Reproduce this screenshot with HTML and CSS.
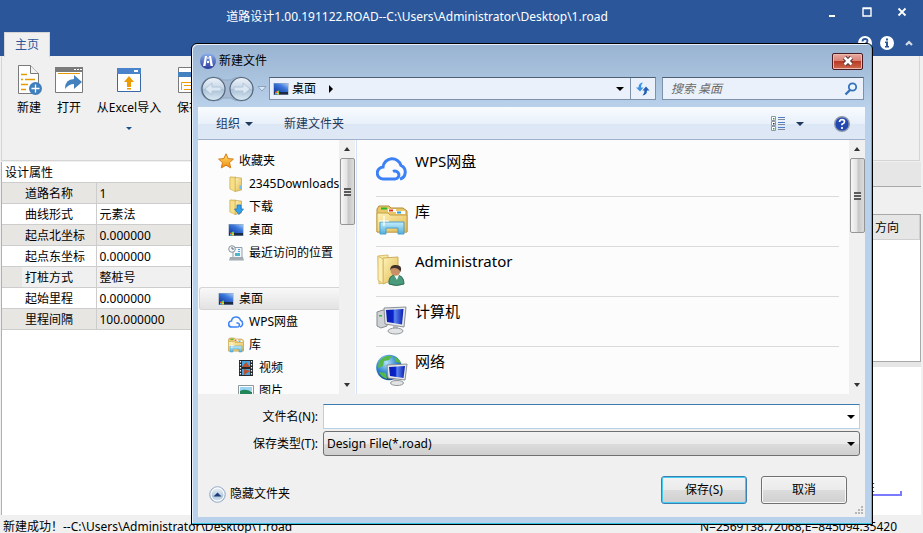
FILE: index.html
```html
<!DOCTYPE html>
<html lang="zh-CN">
<head>
<meta charset="utf-8">
<title>道路设计</title>
<link rel="stylesheet" href="styles.css">
</head>
<body>
<svg class="defs" width="0" height="0" aria-hidden="true">
  <defs>
    <linearGradient id="screen" x1="0" y1="1" x2="1" y2="0"><stop offset="0" stop-color="#123a9c"/><stop offset=".6" stop-color="#3d78dc"/><stop offset="1" stop-color="#a9cdf5"/></linearGradient>
    <linearGradient id="monitor" x1="0" y1="0" x2="1" y2="0"><stop offset="0" stop-color="#0b1eb4"/><stop offset=".4" stop-color="#0a22c8"/><stop offset=".5" stop-color="#5b86f0"/><stop offset="1" stop-color="#0a1cb0"/></linearGradient>
    <linearGradient id="folder" x1="0" y1="0" x2="1" y2="1"><stop offset="0" stop-color="#fdf3b8"/><stop offset="1" stop-color="#e3b94f"/></linearGradient>
    <linearGradient id="glass" x1="0" y1="0" x2="0" y2="1"><stop offset="0" stop-color="#c5eefb"/><stop offset="1" stop-color="#52aede"/></linearGradient>
    <linearGradient id="orb" x1="0" y1="0" x2="0" y2="1"><stop offset="0" stop-color="#eef4fa"/><stop offset=".5" stop-color="#c3d3e4"/><stop offset=".51" stop-color="#a9bfd5"/><stop offset="1" stop-color="#dcebf6"/></linearGradient>
    <radialGradient id="globe" cx=".4" cy=".3" r=".7"><stop offset="0" stop-color="#b5e4fb"/><stop offset=".6" stop-color="#2f83cf"/><stop offset="1" stop-color="#144a92"/></radialGradient>
    <linearGradient id="badge" x1="0" y1="0" x2="0" y2="1"><stop offset="0" stop-color="#8fb3ea"/><stop offset="1" stop-color="#2a3b9e"/></linearGradient>
    <linearGradient id="star" x1="0" y1="0" x2="0" y2="1"><stop offset="0" stop-color="#ffe36a"/><stop offset="1" stop-color="#f08a12"/></linearGradient>
  </defs>
  <symbol id="i-desktop" viewBox="0 0 16 16"><rect x=".5" y="2" width="15" height="12" fill="#8fa3bd"/><rect x="1" y="2.500" width="14" height="8.500" fill="url(#screen)"/><rect x="1" y="11" width="14" height="2.500" fill="#1c2a44"/><path d="M2 11l2-1v2H2z" fill="#f0592b"/><path d="M4 10l2-.5V12H4z" fill="#7ed04b"/><path d="M2 12h2v1.500H2z" fill="#43b9f0"/><path d="M4 12h2v1.500H4z" fill="#ffd232"/></symbol>
  <symbol id="i-cloud" viewBox="0 0 32 26"><path d="M19 23H7.500a6 6 0 0 1-.5-12A9.200 9.200 0 0 1 25 9.500a7.200 7.200 0 0 1-1 13.500" fill="none" stroke="#3c82f6" stroke-width="3"/><path d="M17 15.500a4 4 0 1 1 2 7.500" fill="none" stroke="#3c82f6" stroke-width="3"/></symbol>
  <symbol id="i-folder" viewBox="0 0 16 16"><path d="M2 1h6v12H2z" fill="#f8e79c" stroke="#cfae55" stroke-width=".6"/><path d="M7 1.500l6.500.5v12L7 15.500z" fill="url(#folder)" stroke="#bb963c" stroke-width=".6"/><path d="M2 1l5 1v13.500L2 13z" fill="#f7df85" stroke="#cfae55" stroke-width=".6"/><path d="M11.500 9.500h1.500v3.500h-1.500z" fill="#6ec0ea"/></symbol>
  <symbol id="i-library" viewBox="0 0 32 32"><path d="M1 28V5l2-3h10l2 2h12l4 3v21z" fill="#e9c868" stroke="#b28c3a"/><path d="M5 3.500h6v2H5z" fill="#2eb52e"/><path d="M12 5h8v3h-8z" fill="#fff"/><path d="M13 5.500h4v2h-4z" fill="#e03222"/><path d="M20 7h9v3h-9z" fill="#fff"/><path d="M21 7.500h4v2h-4z" fill="#249be0"/><path d="M1 9h11l2 2h17v17H1z" fill="url(#folder)" stroke="#c8a04a"/><path d="M4 30V18h24v12h-6v-6H10v6z" fill="url(#glass)" stroke="#4d9fc9"/><path d="M8 12v10M3 17h10" stroke="#fff" stroke-width="1.200"/></symbol>
</svg>

<header class="app-header">
  <div class="title-row">
    <h1 class="app-title">道路设计1.00.191122.ROAD--C:\Users\Administrator\Desktop\1.road</h1>
    <button class="win-btn" aria-label="最小化"><svg width="12" height="12"><path d="M3 9h6v2H3z" fill="#fff"/></svg></button>
    <button class="win-btn" aria-label="最大化"><svg width="12" height="12"><path d="M2 2.500h8v7.500H2zM1.500 2h9" fill="none" stroke="#fff" stroke-width="1.400"/></svg></button>
    <button class="win-btn" aria-label="关闭"><svg width="12" height="12"><path d="M2.500 2.500l7 7m0-7l-7 7" stroke="#fff" stroke-width="1.800"/></svg></button>
  </div>
  <div class="tab-row">
    <button class="tab">主页</button>
    <div class="header-tools">
      <button class="plain" aria-label="帮助"><svg width="14" height="14"><circle cx="7" cy="7" r="7" fill="#fff"/><path d="M4.500 5.500q0-2.500 2.500-2.500t2.500 2q0 1.500-2.500 3v1M7 10v2" fill="none" stroke="#2b579a" stroke-width="1.800"/></svg></button>
      <button class="plain" aria-label="关于"><svg width="14" height="14"><circle cx="7" cy="7" r="7" fill="#fff"/><path d="M6 2.500h2v2H6zM5 5.500h3V10h1v1.500H5V10h1V7H5z" fill="#2b579a"/></svg></button>
      <button class="plain" aria-label="折叠功能区"><svg width="14" height="14"><path d="M4 9l3-3 3 3" fill="none" stroke="#d5dbe6" stroke-width="2.200"/></svg></button>
    </div>
  </div>
</header>

<nav class="ribbon" aria-label="主页">
  <button class="tool"><svg width="28" height="32" viewBox="0 0 28 32"><path d="M3.500 1.500h12l8 8v20h-20z" fill="#fff" stroke="#7a7a7a"/><path d="M15.500 1.500v8h8" fill="#f2f2f2" stroke="#7a7a7a"/><path d="M6 10.500h6M10 15.500h10M6 15.500h2M6 20.500h7M6 25.500h5" stroke="#e39a05" stroke-width="1.400"/><circle cx="20.500" cy="24.500" r="6.500" fill="#3f7fbd"/><path d="M16.500 24.500h8m-4-4v8" stroke="#fff" stroke-width="1.300"/></svg>新建</button>
  <button class="tool"><svg width="28" height="32" viewBox="0 0 28 32"><path d="M.5 3.500h27v25H.5z" fill="#fff" stroke="#7a7a7a"/><path d="M0 3h28v5H0z" fill="#7a7a7a"/><path d="M19 5h2v1h-2zM22 5h2v1h-2zM25 5h2v1h-2z" fill="#fff"/><path d="M3 9.500h22" stroke="#e39a05"/><path d="M10 25q0-10 9-10v-4l8 7-8 7v-5q-5 0-9 5z" fill="#4382be"/></svg>打开</button>
  <button class="tool tool-wide"><svg width="28" height="32" viewBox="0 0 28 32"><path d="M2.500 4.500h23v23h-23z" fill="#fff" stroke="#3a68a6"/><path d="M2 4h24v6H2z" fill="#4a83c9"/><path d="M19 6h4v2h-4z" fill="#fff"/><path d="M14 12l5 6h-3v5h-4v-5H9zM12 24h4v1.500h-4z" fill="#eb9c05"/></svg>从Excel导入<span class="caret caret-blue"></span></button>
  <button class="tool"><svg width="28" height="32" viewBox="0 0 28 32"><path d="M3.500 3.500h20v25h-20z" fill="#fff" stroke="#7a7a7a"/><path d="M3 8h21v5H3z" fill="#4382be"/><path d="M6.500 26v-7.500h14M9 21.500h10M9 25.500h10" fill="none" stroke="#eb9c05"/></svg>保存</button>
</nav>

<main class="workspace">
  <section class="props">
    <table class="prop-table">
      <caption>设计属性</caption>
      <tbody>
        <tr><th scope="row">道路名称</th><td>1</td></tr>
        <tr><th scope="row">曲线形式</th><td>元素法</td></tr>
        <tr><th scope="row">起点北坐标</th><td>0.000000</td></tr>
        <tr><th scope="row">起点东坐标</th><td>0.000000</td></tr>
        <tr class="current"><th scope="row">打桩方式</th><td>整桩号</td></tr>
        <tr><th scope="row">起始里程</th><td>0.000000</td></tr>
        <tr><th scope="row">里程间隔</th><td>100.000000</td></tr>
      </tbody>
    </table>
  </section>
  <section class="design">
    <div class="band"></div>
    <div class="grid-box"><div class="grid-head">方向</div></div>
    <div class="canvas"><div class="axis">E</div></div>
  </section>
</main>

<footer class="status"><span>新建成功！--C:\Users\Administrator\Desktop\1.road</span><span>N=2569138.72068,E=845094.35420</span></footer>

<div class="dialog" role="dialog" aria-labelledby="dlg-title">
  <div class="dlg-title-row">
    <svg width="16" height="16"><circle cx="8" cy="8" r="8" fill="url(#badge)"/><path d="M5 3h2L5.500 13H3zM9 3h2l2 10h-2.500zM7.500 4h1v2h-1zM7 8h2v2H7z" fill="#fff"/></svg>
    <h2 id="dlg-title">新建文件</h2>
    <button class="dlg-close" aria-label="关闭"><svg width="14" height="12"><path d="M3.500 2.500l7 7m0-7l-7 7" stroke="#5b3434" stroke-width="4.600"/><path d="M3.500 2.500l7 7m0-7l-7 7" stroke="#fff" stroke-width="2.600"/></svg></button>
  </div>
  <div class="nav-row">
    <button class="plain nav-orbs" aria-label="后退 前进"><svg width="56" height="26"><path d="M13 1q7 0 10 3h8q3-3 10-3a12 12 0 0 1 0 24q-7 0-10-3h-8q-3 3-10 3a12 12 0 0 1 0-24z" fill="#a5bad2" stroke="#8fa7c1"/><g fill="url(#orb)" stroke="#53657b" stroke-width="1.200"><circle cx="13.500" cy="13" r="11.500"/><circle cx="41.500" cy="13" r="11.500"/></g><path d="M5 13l7-6v4h9v4h-9v4zM50 13l-7-6v4h-9v4h9v4z" fill="#dbe7f2" stroke="#b3c6d9"/></svg></button>
    <button class="plain nav-more" aria-label="最近的页面"><svg width="10" height="8"><path d="M1 1.500h8L5 6z" fill="#dbe8f5" stroke="#8ba3c0"/></svg></button>
    <div class="address">
      <svg width="16" height="16"><use href="#i-desktop"/></svg>
      <span class="crumb">桌面</span>
      <svg width="8" height="8"><path d="M2 0v8l4-4z" fill="#000"/></svg>
      <button class="plain addr-drop" aria-label="以前的位置"><span class="caret"></span></button>
      <button class="plain refresh" aria-label="刷新"><svg width="16" height="16"><path d="M1 6.500h2.500Q3.500 2 8 1.500 6 3.500 6 6.500h2.500L5 10.500z" fill="#3a93e2"/><path d="M7.500 9.500l3.500-4 3.500 4H12q0 4.500-4.500 5 2-2 2-5z" fill="#245fb5"/></svg></button>
    </div>
    <label class="search"><input type="text" placeholder="搜索 桌面" aria-label="搜索 桌面"><svg width="14" height="14"><circle cx="8.500" cy="5" r="3.700" fill="#eaf4fd" stroke="#3573b9" stroke-width="1.800"/><path d="M6 8l-4.500 4.500" stroke="#3573b9" stroke-width="2.400"/></svg></label>
  </div>

  <div class="dlg-toolbar">
    <button class="plain link">组织<span class="caret caret-navy"></span></button>
    <button class="plain link">新建文件夹</button>
    <button class="plain view" aria-label="更改视图"><svg width="16" height="16"><g fill="#fff" stroke="#8c97a5"><path d="M1.500.5h4v4h-4zM1.500 5.500h4v4h-4zM1.500 10.500h4v4h-4z"/></g><path d="M3 2h1.500v1.500H3zM3 12h1.500v1.500H3z" fill="#2da34a"/><path d="M3 7h1.500v1.500H3z" fill="#234"/><path d="M8 1.500h7M8 6.500h7M8 11.500h7" stroke="#4d7fcb"/><path d="M8 3.500h7M8 8.500h7M8 13.500h7" stroke="#7d8998"/></svg><span class="caret caret-navy"></span></button>
    <button class="plain" aria-label="帮助"><svg width="16" height="16"><circle cx="8" cy="8" r="7.300" fill="#2348b0" stroke="#8e99ab" stroke-width="1.400"/><path d="M5.500 6q0-2.300 2.500-2.300t2.500 2q0 1.400-2.500 2.600v1M8 11v2" fill="none" stroke="#fff" stroke-width="1.700"/></svg></button>
  </div>

  <div class="dlg-body">
    <ul class="tree">
      <li><svg width="16" height="16"><path d="M8 .8l2.200 4.800 5.200.5-3.900 3.500 1.200 5.300L8 12.200l-4.700 2.700 1.200-5.300L.6 6.100l5.200-.5z" fill="url(#star)" stroke="#d77a16"/></svg>收藏夹</li>
      <li class="l1"><svg width="16" height="16"><use href="#i-folder"/></svg>2345Downloads</li>
      <li class="l1"><svg width="16" height="16"><use href="#i-folder"/><path d="M9 6h4v4h2.500L11 15.500 6.500 10H9z" fill="#32a1ec" stroke="#1b6fb8" stroke-width=".7"/></svg>下载</li>
      <li class="l1"><svg width="16" height="16"><use href="#i-desktop"/></svg>桌面</li>
      <li class="l1"><svg width="16" height="16"><path d="M5 2.500h9V13H5z" fill="#f1f6fa" stroke="#91a0ac"/><path d="M7 8h5v3H7z" fill="#4db5c6"/><path d="M10 4.500h2M10 6.500h2" stroke="#4b98dd"/><path d="M2 12h13l1 3.500H1z" fill="#a4acb3"/><circle cx="4" cy="4" r="3.300" fill="#f5f7f8" stroke="#87939b"/><path d="M4 2v2h2" fill="none" stroke="#576b79"/></svg>最近访问的位置</li>
      <li class="selected after-gap"><svg width="16" height="16"><use href="#i-desktop"/></svg>桌面</li>
      <li class="l1"><svg width="16" height="16"><use href="#i-cloud"/></svg>WPS网盘</li>
      <li class="l1"><svg width="16" height="16"><use href="#i-library"/></svg>库</li>
      <li class="l2"><svg width="16" height="16"><path d="M1 0h14v16H1z" fill="#24282c"/><path d="M4 1h8v6H4zM4 9h8v6H4z" fill="#4aa3de"/><path d="M4 7l4-5 4 5zM6 15V9l6 2z" fill="#b9502e"/><path d="M2.500 1v15M13.500 1v15" stroke="#eef2f4" stroke-width="1.200" stroke-dasharray="1.500 1.500"/></svg>视频</li>
      <li class="l2"><svg width="16" height="16"><path d="M.5 2.500h15v11H.5z" fill="#fff" stroke="#8e989f"/><path d="M2 4h12v4H2z" fill="#9bd5f3"/><path d="M2 8q5-3 12 1v3H2z" fill="#22855a"/></svg>图片</li>
    </ul>
    <div class="scroll" aria-hidden="true"><span class="up"></span><span class="thumb thumb-tree"></span><span class="down"></span></div>
    <ul class="files">
      <li><svg width="32" height="32" viewBox="0 -2 32 32"><use href="#i-cloud" width="32" height="26"/></svg>WPS网盘</li>
      <li><svg width="32" height="32"><use href="#i-library"/></svg>库</li>
      <li><svg width="32" height="32"><path d="M2 2l10-1v26l-9 3z" fill="#f9eaa6" stroke="#d8bd6a"/><path d="M7 4l15-1v21L7 30z" fill="url(#folder)" stroke="#cbae5c"/><path d="M2 2l5 3v25l-5-4z" fill="#fbeeb2" stroke="#d8bd6a"/><path d="M13 30q-1-9 7-9 8 0 8 9-8 3-15 0z" fill="#4a9a7c" stroke="#2c6c54"/><path d="M18 21l3 5 2-5z" fill="#f5fafa"/><circle cx="19.500" cy="17" r="4.800" fill="#c99066"/><path d="M14 17q0-7 6-6 7 0 4.500 7-2-4-6-4-4 0-4.500 3z" fill="#40322b"/></svg>Administrator</li>
      <li><svg width="32" height="32"><path d="M1 8l6-2 4 1v15l-6 2-4-2z" fill="#cfd3d6" stroke="#878c90"/><path d="M3 11h3v1.500H3z" fill="#35b535"/><path d="M8 4l22-1-2 20-19-3z" fill="#e6e8ea" stroke="#8b9094"/><path d="M10 6l17.500-1-1.500 15.500L11 18z" fill="url(#monitor)"/><path d="M17 21l5 1v3h-5z" fill="#b4b8bc"/><ellipse cx="19.500" cy="27" rx="7.500" ry="3" fill="#e1e3e5" stroke="#92979b"/></svg>计算机</li>
      <li><svg width="32" height="32"><circle cx="13" cy="13.500" r="12.800" fill="url(#globe)"/><path d="M3 7q6-6 13-5l-3 4-5 1-1 5-5 2zM18 3q5 1 7 6l-5-1zM3 18l7 1 1 6q-6-2-8-7z" fill="#55b848"/><path d="M11 11l20-1-2 16-17-2z" fill="#e6e8ea" stroke="#8b9094"/><path d="M13 13l16-1-1.500 12L14 22z" fill="url(#monitor)"/><path d="M18 25l5 1v2h-5z" fill="#b4b8bc"/><ellipse cx="21" cy="29" rx="6.500" ry="2.500" fill="#e1e3e5" stroke="#92979b"/></svg>网络</li>
    </ul>
    <div class="scroll" aria-hidden="true"><span class="up"></span><span class="thumb thumb-files"></span><span class="down"></span></div>
  </div>

  <form class="dlg-footer">
    <div class="field"><label for="fname">文件名(N):</label><div class="combo"><input id="fname" type="text"><span class="caret"></span></div></div>
    <div class="field"><label for="ftype">保存类型(T):</label><div class="combo combo-gray"><select id="ftype"><option>Design File(*.road)</option></select><span class="caret"></span></div></div>
    <div class="actions">
      <button type="button" class="plain hide"><svg width="17" height="17"><circle cx="8.500" cy="8.500" r="7.800" fill="url(#orb)" stroke="#9aa8c3"/><circle cx="8.500" cy="8.500" r="6.500" fill="none" stroke="#fff"/><path d="M4.500 10.500h8l-4-4z" fill="#1e3c7c"/></svg>隐藏文件夹</button>
      <button type="button" class="btn btn-default">保存(S)</button>
      <button type="button" class="btn">取消</button>
    </div>
    <svg class="grip" width="9" height="9"><path d="M7 1h2M4 4h2M7 4h2M1 7h2M4 7h2M7 7h2" stroke="#b6b6b6" stroke-width="2"/></svg>
  </form>
</div>
</body>
</html>
```
FILE: styles.css
```css
* { box-sizing: border-box; }

body {
  margin: 0;
  height: 100vh;
  display: flex;
  flex-direction: column;
  position: relative;
  overflow: hidden;
  background: #f0f0f0;
  color: #000;
  font: 12px/16px "Noto Sans", "Noto Sans CJK SC", sans-serif;
}

button, input, select { font: inherit; color: inherit; }
button { padding: 0; }
svg { flex: none; display: block; }
ul { list-style: none; margin: 0; padding: 0; }
h1, h2 { margin: 0; font: inherit; }
.defs { position: absolute; }

.plain {
  display: flex;
  align-items: center;
  border: 0;
  background: none;
}

.caret {
  flex: none;
  width: 0;
  height: 0;
  border: 4px solid transparent;
  border-top-color: #000;
  border-bottom: 0;
}
.caret-blue { border-width: 3px; border-bottom: 0; border-top-color: #1f4e8c; }
.caret-navy { border-top-color: #1e395b; }

/* Application header */
.app-header { background: #2b579a; color: #fff; }
.title-row { display: flex; height: 32px; padding-right: 4px; }
.app-title { flex: 1; padding-left: 20px; text-align: center; line-height: 33px; }
.win-btn {
  width: 35px;
  height: 24px;
  display: grid;
  place-items: center;
  border: 0;
  background: none;
}
.tab-row { display: flex; justify-content: space-between; padding: 0 7px 0 4px; height: 24px; }
.tab {
  width: 46px;
  height: 25px;
  border: 1px solid #d5d5d5;
  border-bottom: 0;
  background: #f0f0f0;
  color: #2b579a;
}
.header-tools { display: flex; gap: 8px; height: 22px; }

/* Ribbon */
.ribbon {
  display: flex;
  height: 105px;
  margin: 0 3px 0 1px;
  padding: 8px 0 0 7px;
  border: 1px solid #d5d5d5;
  border-top: 0;
}
.tool {
  width: 40px;
  display: flex;
  flex-direction: column;
  align-items: center;
  border: 0;
  background: none;
  white-space: nowrap;
}
.tool svg { margin-bottom: 4px; }
.tool-wide { width: 80px; }
.tool .caret { margin-top: 11px; }

/* Workspace */
.workspace { flex: 1; display: flex; min-height: 0; padding: 1px 2px 0 1px; }
.props { width: 240px; background: #fff; border-left: 1px solid #b0b0b0; }
.prop-table { width: 100%; border-collapse: collapse; }
.prop-table caption { padding-left: 3px; height: 20px; line-height: 21px; text-align: left; }
.prop-table th, .prop-table td {
  height: 21px;
  padding: 2px 3px 0;
  border-top: 1px solid #cdcdcd;
  border-bottom: 1px solid #cdcdcd;
  font-weight: 400;
  text-align: left;
  white-space: nowrap;
}
.prop-table th { width: 94px; padding-left: 23px; border-right: 1px solid #cdcdcd; }
.prop-table tr:nth-child(odd) { background: #e8e6e2; }
.prop-table tr.current { background: linear-gradient(90deg, #e8e6e2 20px, #f0f0f0 20px); }
.design { flex: 1; display: flex; flex-direction: column; }
.band { height: 25px; margin-bottom: 27px; background: #e6e6e6; border-bottom: 1px solid #a8a8a8; }
.grid-box { height: 148px; border: 1px solid #a8a8a8; background: #fff; }
.grid-head {
  height: 25px;
  padding-right: 20px;
  background: #e6e6e6;
  border: 1px solid #d0d0d0;
  border-top: 0;
  line-height: 26px;
  text-align: right;
}
.canvas {
  flex: 1;
  display: flex;
  justify-content: flex-end;
  align-items: flex-end;
  padding: 0 19px 19px;
  border-top: 5px solid #e6e6e6;
  background: #fff;
}
.axis {
  width: 40px;
  display: flex;
  justify-content: space-between;
  align-items: flex-end;
  padding-left: 6px;
  border-bottom: 2px solid #7a7aff;
  color: #2222b0;
  line-height: 12px;
}
.axis::after { content: ""; width: 2px; height: 3px; background: #7a7aff; }
.status {
  display: flex;
  justify-content: space-between;
  height: 18px;
  padding: 3px 26px 0 3px;
  line-height: 18px;
}

/* Save dialog */
.dialog {
  position: absolute;
  inset: 43px 50px 8px 191px;
  display: flex;
  flex-direction: column;
  padding: 0 7px 7px 6px;
  border: 1px solid #000;
  border-radius: 6px 6px 0 0;
  background: linear-gradient(#98b3d1, #b9d1ea 64px);
  box-shadow: inset -1px -1px 0 #35c3e4, inset 1px 1px 0 #e9f2fb;
}
.dlg-title-row { display: flex; align-items: center; gap: 3px; height: 32px; padding: 2px 2px 0; }
.dlg-title-row h2 { flex: 1; }
.dlg-close {
  width: 31px;
  height: 17px;
  display: grid;
  place-items: center;
  border: 1px solid #4b1b22;
  border-radius: 2px;
  background: linear-gradient(#e9aaa2, #d98376 45%, #b83a24 50%, #cf6a50);
  box-shadow: inset 0 0 0 1px #ecb9ae;
}
.nav-row { display: flex; align-items: center; height: 25px; margin-bottom: 6px; padding-right: 1px; }
.nav-orbs { margin-left: 2px; }
.nav-more { margin: 0 2px 0 1px; }
.address, .search {
  display: flex;
  align-items: center;
  height: 23px;
  border: 1px solid #7d92aa;
  border-top-color: #4f6073;
  background: #eaf1fa;
}
.address { flex: 1; padding-left: 3px; }
.crumb { margin: 0 11px 0 3px; }
.addr-drop { margin-left: auto; padding: 0 6px; }
.refresh { height: 100%; padding: 0 4px; border-left: 1px solid #7d92aa; }
.search { width: 202px; margin-left: 6px; padding: 0 5px 0 8px; }
.search input {
  flex: 1;
  min-width: 0;
  padding: 0;
  border: 0;
  outline: 0;
  background: none;
  font-style: italic;
}
.search input::placeholder { color: #6b6b6b; opacity: 1; }
.dlg-toolbar {
  display: flex;
  align-items: center;
  height: 33px;
  padding: 0 15px 0 18px;
  border-top: 1px solid #f8fbff;
  border-bottom: 1px solid #9fb1cb;
  background: linear-gradient(#f8fbfe, #e8f0fa 50%, #dce7f5 51%, #dfe8f5);
}
.link { gap: 5px; margin-right: 31px; color: #1e395b; }
.view { gap: 10px; margin: 0 30px 0 auto; }

.dlg-body { flex: 1; display: flex; min-height: 0; background: #fcfcfc; }
.tree { width: 141px; padding: 9px 0 0 1px; overflow: hidden; }
.tree li {
  display: flex;
  align-items: center;
  gap: 5px;
  height: 23px;
  padding-left: 19px;
  white-space: nowrap;
}
.tree .l1 { padding-left: 29px; }
.tree .l2 { padding-left: 39px; }
.tree .after-gap { margin-top: 23px; }
.tree .selected {
  padding-left: 18px;
  border: 1px solid #d5d5d5;
  border-right: 0;
  border-radius: 3px 0 0 3px;
  background: linear-gradient(#f8f8f8, #e3e3e3);
}
.scroll {
  width: 16px;
  flex: none;
  display: flex;
  flex-direction: column;
  align-items: center;
  padding: 7px 0;
  background: #f0f0f0;
}
.up, .down { border: 3px solid transparent; }
.up { border-top: 0; border-bottom: 4px solid #333; margin-bottom: 7px; }
.down { border-bottom: 0; border-top: 4px solid #333; margin-top: auto; }
.thumb {
  width: 15px;
  display: grid;
  place-items: center;
  border: 1px solid #959595;
  border-radius: 2px;
  background: linear-gradient(90deg, #f6f6f6, #e3e3e3 45%, #c7c7c9 55%, #dcdcdc);
}
.thumb::before {
  content: "";
  width: 7px;
  height: 8px;
  background: repeating-linear-gradient(#5a5a5a 0 2px, #e8e8e8 2px 3px);
}
.thumb-tree { height: 67px; }
.thumb-files { height: 75px; }
.files {
  flex: 1;
  margin-left: 1px;
  padding: 7px 10px 0 19px;
  border-left: 1px solid #d3e3f4;
  overflow: hidden;
}
.files li {
  display: flex;
  gap: 7px;
  height: 50px;
  padding-top: 4px;
  border-bottom: 1px solid #dadada;
  font-size: 15px;
  line-height: 20px;
}
.files svg { margin-top: 3px; }

.dlg-footer { position: relative; padding: 10px 5px 13px 0; background: #f0f0f0; }
.field { display: flex; align-items: center; margin-bottom: 2px; }
.field label { width: 125px; padding-right: 5px; text-align: right; }
.combo {
  flex: 1;
  display: flex;
  align-items: center;
  height: 25px;
  padding-right: 4px;
  border: 1px solid #b5d2ea;
  border-top-color: #3d7bad;
  background: #fff;
}
.combo input, .combo select {
  flex: 1;
  min-width: 0;
  height: 100%;
  padding: 0 3px;
  border: 0;
  outline: 0;
  background: none;
  appearance: none;
}
.combo-gray {
  border-color: #707070;
  border-radius: 3px;
  background: linear-gradient(#f2f2f2, #ebebeb 50%, #dcdcdc 51%, #cfcfcf);
}
.actions { display: flex; align-items: center; gap: 14px; padding: 18px 13px 0 11px; }
.hide { gap: 4px; margin: 8px auto 0 0; }
.btn {
  width: 86px;
  height: 28px;
  border: 1px solid #707070;
  border-radius: 3px;
  background: linear-gradient(#f2f2f2, #ebebeb 50%, #dcdcdc 51%, #cfcfcf);
  box-shadow: inset 0 0 0 1px #f8f8f8;
}
.btn-default { border-color: #3c7fb1; box-shadow: inset 0 0 0 1px #43cbf0; }
.grip { position: absolute; right: 2px; bottom: 2px; }
```
